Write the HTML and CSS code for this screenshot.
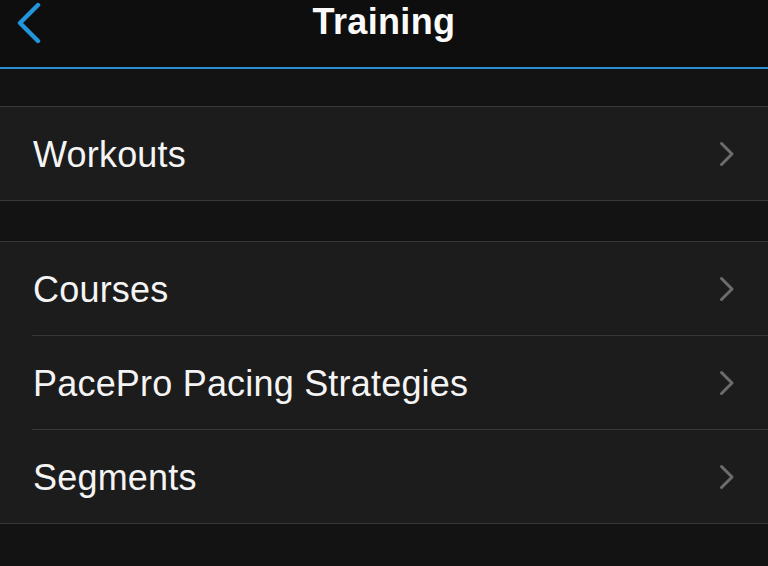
FILE: index.html
```html
<!DOCTYPE html>
<html>
<head>
<meta charset="utf-8">
<link rel="stylesheet" href="styles.css">
</head>
<body>
<header class="nav">
  <div class="nav-left">
    <svg class="back" width="30" height="46" viewBox="0 0 30 46"><polyline points="21,5 3,23 21,41" fill="none" stroke="#2196dc" stroke-width="4.4" stroke-linecap="round" stroke-linejoin="round"/></svg>
  </div>
  <h1 class="title">Training</h1>
  <div class="nav-right"></div>
</header>
<main>
  <section class="group first">
    <div class="row"><div class="row-inner"><span class="label">Workouts</span><svg class="chev" width="16" height="26" viewBox="0 0 16 26"><polyline points="2.5,2.5 13,13 2.5,23.5" fill="none" stroke="#6c6c6c" stroke-width="3" stroke-linecap="round" stroke-linejoin="round"/></svg></div></div>
  </section>
  <section class="group">
    <div class="row"><div class="row-inner"><span class="label">Courses</span><svg class="chev" width="16" height="26" viewBox="0 0 16 26"><polyline points="2.5,2.5 13,13 2.5,23.5" fill="none" stroke="#6c6c6c" stroke-width="3" stroke-linecap="round" stroke-linejoin="round"/></svg></div></div>
    <div class="row"><div class="row-inner"><span class="label">PacePro Pacing Strategies</span><svg class="chev" width="16" height="26" viewBox="0 0 16 26"><polyline points="2.5,2.5 13,13 2.5,23.5" fill="none" stroke="#6c6c6c" stroke-width="3" stroke-linecap="round" stroke-linejoin="round"/></svg></div></div>
    <div class="row"><div class="row-inner"><span class="label">Segments</span><svg class="chev" width="16" height="26" viewBox="0 0 16 26"><polyline points="2.5,2.5 13,13 2.5,23.5" fill="none" stroke="#6c6c6c" stroke-width="3" stroke-linecap="round" stroke-linejoin="round"/></svg></div></div>
  </section>
</main>
</body>
</html>
```
FILE: styles.css
```css
html, body {
  margin: 0;
  padding: 0;
}
body {
  background: #131313;
  font-family: "Liberation Sans", Arial, sans-serif;
  color: #f4f4f4;
  width: 768px;
  height: 566px;
  overflow: hidden;
}
.nav {
  display: grid;
  grid-template-columns: 1fr auto 1fr;
  height: 67px;
  background: #0e0e0e;
  border-bottom: 2px solid #2a8fd0;
}
.nav-left {
  padding-left: 17px;
  padding-top: 0;
}
.back {
  display: block;
}
.title {
  margin: 0;
  font-size: 36px;
  font-weight: bold;
  line-height: 44px;
  letter-spacing: 0.35px;
  color: #fafafa;
}
main {
  padding-top: 37px;
}
.group {
  background: #1c1c1c;
  border-top: 1px solid #383838;
  border-bottom: 1px solid #383838;
  margin-bottom: 40px;
}
.row {
  padding-left: 32px;
}
.row-inner {
  display: flex;
  align-items: center;
  justify-content: space-between;
  height: 93px;
  border-bottom: 1px solid #383838;
  padding-right: 33px;
}
.row:last-child .row-inner {
  border-bottom: none;
}
.label {
  font-size: 36px;
  padding-left: 1px;
  padding-top: 2px;
  letter-spacing: 0.2px;
}
.chev {
  display: block;
}
```
